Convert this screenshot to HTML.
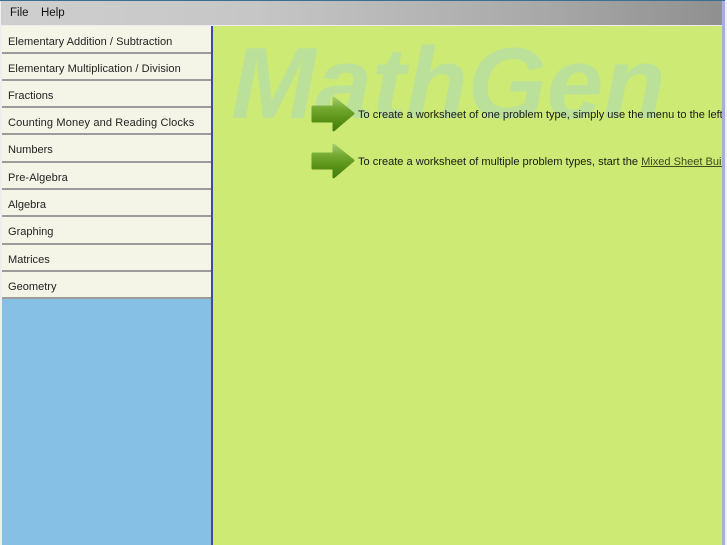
<!DOCTYPE html>
<html>
<head>
<meta charset="utf-8">
<style>
html,body{margin:0;padding:0;width:727px;height:545px;overflow:hidden;background:#f0f0f0;font-family:"Liberation Sans",sans-serif;color:#1a1a1a}
div{position:absolute;box-sizing:border-box}
#top{left:0;top:0;width:727px;height:1px;background:#3f6f8f}
#bar{left:1px;top:1px;width:724px;height:24px;background:linear-gradient(90deg,#cfcfcf 0%,#c6c6c6 35%,#a8a8a8 75%,#8f8f8f 100%)}
#barline{left:0;top:25px;width:722px;height:1px;background:#ececec}
.m{top:5px;font-size:11.5px;line-height:14px;color:#111}
#side{left:2px;top:26px;width:209px;height:519px;background:#86c0e4}
.row{left:0;width:209px;background:#f4f5e7;border-bottom:2px solid #9c9c9c;font-size:11.05px;color:#222;padding-left:6px;white-space:nowrap}
#vl{left:211px;top:26px;width:2px;height:519px;background:#3f4a9f}
#main{left:213px;top:26px;width:509px;height:519px;background:#ccea74;overflow:hidden}
#logo{left:18px;top:-5px;font-size:101.5px;line-height:124px;font-weight:bold;font-style:italic;color:#bbe09a;white-space:nowrap}
.t{left:145px;font-size:11.05px;line-height:14px;color:#1a1a1a;white-space:nowrap}
.t u{color:#3f4a1c}
#rl{left:722px;top:1px;width:3px;height:544px;background:#a9addb}
#rw{left:725px;top:0;width:2px;height:545px;background:#f0f0f0}
#ll{left:0;top:26px;width:2px;height:519px;background:#eeeeee}
svg{position:absolute;left:98px}
</style>
</head>
<body>
<div id="top"></div>
<div id="bar"></div>
<div class="m" style="left:10px;top:6px">File</div>
<div class="m" style="left:41px;top:6px">Help</div>
<div id="barline"></div>
<div id="ll"></div>
<div id="side">
<div class="row" style="top:0;height:28px;line-height:33px;letter-spacing:.03px">Elementary Addition / Subtraction</div>
<div class="row" style="top:28px;height:27px;line-height:31px;letter-spacing:.06px">Elementary Multiplication / Division</div>
<div class="row" style="top:55px;height:27px;line-height:31px">Fractions</div>
<div class="row" style="top:82px;height:27px;line-height:31px;letter-spacing:.12px">Counting Money and Reading Clocks</div>
<div class="row" style="top:109px;height:28px;line-height:31px">Numbers</div>
<div class="row" style="top:137px;height:27px;line-height:31px;letter-spacing:.08px">Pre-Algebra</div>
<div class="row" style="top:164px;height:27px;line-height:30px">Algebra</div>
<div class="row" style="top:191px;height:28px;line-height:31px">Graphing</div>
<div class="row" style="top:219px;height:27px;line-height:30px">Matrices</div>
<div class="row" style="top:246px;height:27px;line-height:31px">Geometry</div>
</div>
<div id="vl"></div>
<div id="main">
<div id="logo">MathGen</div>
<svg style="top:70px" width="46" height="38" viewBox="0 0 46 38">
<defs>
<linearGradient id="g" x1="0" y1="0" x2="0" y2="1"><stop offset="0" stop-color="#a3ce74"/><stop offset=".35" stop-color="#72a82f"/><stop offset=".7" stop-color="#568f14"/><stop offset="1" stop-color="#3f7a10"/></linearGradient>
</defs>
<path d="M2 9.5H21.5V1.5Q22 0 23.5 1L43 16.5Q44 17.5 43 18.5L23.5 35Q22 36 21.5 34.5V26.5H2Q0.5 26.5 0.5 25V11Q0.5 9.5 2 9.5Z" fill="url(#g)"/>
</svg>
<svg style="top:117px" width="46" height="38" viewBox="0 0 46 38">
<path d="M2 9.5H21.5V1.5Q22 0 23.5 1L43 16.5Q44 17.5 43 18.5L23.5 35Q22 36 21.5 34.5V26.5H2Q0.5 26.5 0.5 25V11Q0.5 9.5 2 9.5Z" fill="url(#g)"/>
</svg>
<div class="t" style="top:82px">To create a worksheet of one problem type, simply use the menu to the left.</div>
<div class="t" style="top:129px">To create a worksheet of multiple problem types, start the <u>Mixed Sheet Builder</u>.</div>
</div>
<div id="rl"></div>
<div id="rw"></div>
</body>
</html>
